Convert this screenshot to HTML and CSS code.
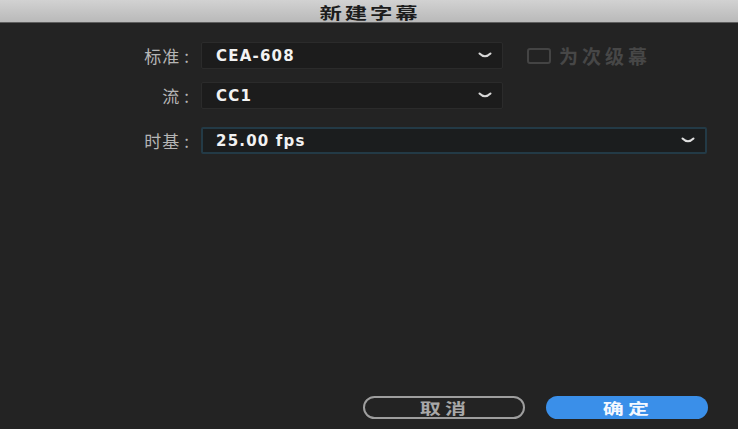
FILE: index.html
```html
<!DOCTYPE html>
<html lang="zh">
<head>
<meta charset="utf-8">
<link rel="stylesheet" href="styles.css">
</head>
<body>
<div class="dialog">
  <div class="titlebar"><span class="title">新建字幕</span></div>
  <div class="form">
    <div class="row">
      <label class="label">标准<span class="colon">:</span></label>
      <div class="select">
        <span class="value">CEA-608</span>
        <svg class="chev" width="14" height="8" viewBox="0 0 14 8"><path d="M1.5 1.5 Q7 7 12.5 1.5" fill="none" stroke="#d8d8d8" stroke-width="2" stroke-linecap="round"/></svg>
      </div>
      <div class="check">
        <span class="box"></span>
        <span class="check-label">为次级幕</span>
      </div>
    </div>
    <div class="row">
      <label class="label">流<span class="colon">:</span></label>
      <div class="select">
        <span class="value">CC1</span>
        <svg class="chev" width="14" height="8" viewBox="0 0 14 8"><path d="M1.5 1.5 Q7 7 12.5 1.5" fill="none" stroke="#d8d8d8" stroke-width="2" stroke-linecap="round"/></svg>
      </div>
    </div>
    <div class="row row-time">
      <label class="label">时基<span class="colon">:</span></label>
      <div class="select select-wide focused">
        <span class="value">25.00 fps</span>
        <svg class="chev" width="14" height="8" viewBox="0 0 14 8"><path d="M1.5 1.5 Q7 7 12.5 1.5" fill="none" stroke="#e0e0e0" stroke-width="2" stroke-linecap="round"/></svg>
      </div>
    </div>
  </div>
  <div class="footer">
    <button class="btn btn-cancel"><span class="btn-text">取消</span></button>
    <button class="btn btn-ok"><span class="btn-text">确定</span></button>
  </div>
</div>
</body>
</html>
```
FILE: styles.css
```css
html, body {
  margin: 0;
  padding: 0;
  background: #232323;
}
body {
  width: 738px;
  height: 429px;
  overflow: hidden;
  font-family: "Noto Sans CJK SC", "Noto Sans", sans-serif;
}
.dialog {
  display: flex;
  flex-direction: column;
  height: 429px;
}
.titlebar {
  height: 21px;
  padding-top: 1px;
  display: flex;
  align-items: center;
  justify-content: center;
  background: linear-gradient(#d2d2d2, #b9b9b9);
  border-bottom: 1px solid #5e5e5e;
}
.title {
  display: inline-block;
  color: #1c1c1c;
  font-weight: 700;
  font-size: 16px;
  line-height: 18px;
  letter-spacing: 2px;
  margin-right: -2px;
  transform: scaleX(1.4);
}
.form {
  display: flex;
  flex-direction: column;
  gap: 13px;
  padding-top: 19px;
}
.row {
  display: flex;
  align-items: center;
  gap: 10px;
}
.row-time {
  margin-top: 5px;
}
.label {
  width: 191px;
  text-align: right;
  color: #b5b5b5;
  font-size: 17px;
  letter-spacing: 1px;
}
.colon {
  margin-left: 4px;
  letter-spacing: 0;
  padding-right: 2px;
}
.select {
  box-sizing: border-box;
  width: 302px;
  height: 27px;
  display: flex;
  align-items: center;
  justify-content: space-between;
  padding: 0 10px 0 14px;
  background: #1c1c1c;
  border: 1px solid #2b2b2b;
  border-radius: 2px;
}
.select-wide {
  width: 506px;
}
.focused {
  background: #1b1d1e;
  border: 2px solid #233a46;
  padding-left: 13px;
}
.value {
  color: #f2f2f2;
  font-family: "DejaVu Sans", "Open Sans", sans-serif;
  font-weight: 700;
  font-size: 15px;
  letter-spacing: 1.2px;
}
.chev {
  display: block;
}
.check {
  display: flex;
  align-items: center;
  gap: 8px;
  margin-left: 14px;
}
.box {
  box-sizing: border-box;
  width: 24px;
  height: 16px;
  border: 2px solid #444;
  border-radius: 3px;
}
.check-label {
  color: #474747;
  font-size: 19px;
  letter-spacing: 4px;
  font-weight: 700;
}
.footer {
  margin-top: auto;
  display: flex;
  justify-content: flex-end;
  gap: 21px;
  padding: 0 30px 10px 0;
}
.btn {
  box-sizing: border-box;
  width: 162px;
  height: 23px;
  border-radius: 12px;
  font-family: "Noto Sans CJK SC", sans-serif;
  font-size: 15px;
  font-weight: 700;
  line-height: 1;
  padding: 0;
  display: flex;
  align-items: center;
  justify-content: center;
}
.btn-text {
  display: inline-block;
  letter-spacing: 3px;
  margin-right: -3px;
  transform: scaleX(1.4);
}
.btn-cancel {
  background: transparent;
  border: 2px solid #9e9e9e;
  color: #a8a8a8;
}
.btn-ok {
  background: #3a8fe9;
  border: none;
  color: #f4f8ff;
}
```
